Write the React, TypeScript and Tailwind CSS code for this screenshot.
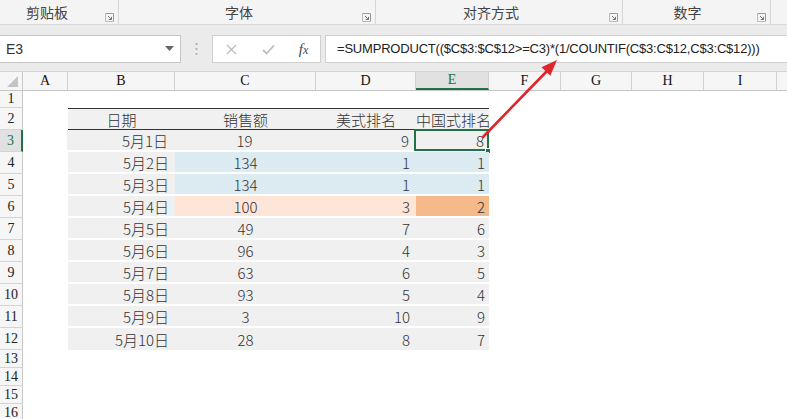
import React from "react";

const CJK = { fontFamily: '"Noto Sans CJK SC", "Noto Sans", sans-serif' };
const SERIF = { fontFamily: '"Liberation Serif", "DejaVu Serif", serif' };
const SANS = { fontFamily: '"Liberation Sans", "Noto Sans CJK SC", sans-serif' };

type Row = [string, string, string, string];
const data: Row[] = [
  ["5月1日", "19", "9", "8"],
  ["5月2日", "134", "1", "1"],
  ["5月3日", "134", "1", "1"],
  ["5月4日", "100", "3", "2"],
  ["5月5日", "49", "7", "6"],
  ["5月6日", "96", "4", "3"],
  ["5月7日", "63", "6", "5"],
  ["5月8日", "93", "5", "4"],
  ["5月9日", "3", "10", "9"],
  ["5月10日", "28", "8", "7"],
];

function Launcher() {
  return (
    <svg width="9" height="9" viewBox="0 0 9 9" className="shrink-0">
      <path d="M0.5 0.5 H8.5 V8.5" fill="none" stroke="#9a9a9a" strokeWidth="1" />
      <path d="M0.5 0.5 V8.5 H8.5" fill="none" stroke="#bbb" strokeWidth="1" />
      <path d="M3 3 L6.5 6.5 M6.5 3.8 V6.5 H3.8" fill="none" stroke="#777" strokeWidth="1" />
    </svg>
  );
}

function RibbonGroup({ label, w, pr }: { label: string; w: string; pr: string }) {
  return (
    <div className={`${w} ${pr} shrink-0 relative flex h-full items-center justify-center border-r border-[#d6d6d6]`}>
      <span className="text-[14px] text-[#444]" style={CJK}>{label}</span>
      <div className="absolute right-[4px] top-[13px]"><Launcher /></div>
    </div>
  );
}

function RowHeader({ n, h, sel }: { n: number; h: string; sel?: boolean }) {
  return (
    <div
      className={`${h} w-[23px] shrink-0 flex items-center justify-center border-b border-[#d4d4d4] text-[14px] leading-none ${
        sel ? "bg-[#e1e1e1] border-r-2 border-r-[#217346] text-[#217346]" : "bg-[#f6f6f6] border-r border-r-[#c8c8c8] text-[#222]"
      }`}
      style={SERIF}
    >
      {n}
    </div>
  );
}

export default function App() {
  const colHeaders: { l: string; w: string; sel?: boolean }[] = [
    { l: "A", w: "w-[45px]" },
    { l: "B", w: "w-[107px]" },
    { l: "C", w: "w-[141px]" },
    { l: "D", w: "w-[100px]" },
    { l: "E", w: "w-[73px]", sel: true },
    { l: "F", w: "w-[72px]" },
    { l: "G", w: "w-[71px]" },
    { l: "H", w: "w-[72px]" },
    { l: "I", w: "w-[73px]" },
    { l: "", w: "w-[20px]" },
  ];

  const bgC = (i: number) => (i === 1 || i === 2 ? "bg-[#dbebf1]" : i === 3 ? "bg-[#fde6d8]" : "bg-[#f0f0f0]");
  const bgE = (i: number) => (i === 1 || i === 2 ? "bg-[#dbebf1]" : i === 3 ? "bg-[#f6b98a]" : "bg-[#f0f0f0]");

  return (
    <div className="relative w-[787px] h-[419px] overflow-hidden bg-white">
      {/* Ribbon group labels */}
      <div className="flex h-[25px] bg-[#f4f4f4] border-b border-[#d8d8d8]">
        <RibbonGroup label="剪贴板" w="w-[119px]" pr="pr-[24px]" />
        <RibbonGroup label="字体" w="w-[257px]" pr="pr-[16px]" />
        <RibbonGroup label="对齐方式" w="w-[247px]" pr="pr-[16px]" />
        <RibbonGroup label="数字" w="w-[148px]" pr="pr-[18px]" />
        <div className="flex-1" />
      </div>

      {/* Formula bar */}
      <div className="flex h-[47px] bg-[#ebebeb] pt-[10px] pb-[9px] border-b border-[#d6d6d6]">
        <div className="w-[181px] shrink-0 h-[28px] bg-white border border-[#c6c6c6] border-l-0 flex items-center justify-between pl-[6px] pr-[6px]">
          <span className="text-[14px] text-[#333]" style={SANS}>E3</span>
          <svg width="9" height="6" viewBox="0 0 9 6"><path d="M0 0 H9 L4.5 5 Z" fill="#666" /></svg>
        </div>
        <div className="w-[31px] shrink-0 flex items-center justify-center">
          <svg width="3" height="14" viewBox="0 0 3 14">
            <circle cx="1.5" cy="2" r="1.1" fill="#aaa" />
            <circle cx="1.5" cy="7" r="1.1" fill="#aaa" />
            <circle cx="1.5" cy="12" r="1.1" fill="#aaa" />
          </svg>
        </div>
        <div className="w-[109px] shrink-0 h-[28px] bg-white border border-[#d0d0d0] flex items-center">
          <div className="w-[36px] flex justify-center">
            <svg width="11" height="11" viewBox="0 0 11 11"><path d="M1 1 L10 10 M10 1 L1 10" stroke="#bdbdbd" strokeWidth="1.4" /></svg>
          </div>
          <div className="w-[38px] flex justify-center">
            <svg width="13" height="11" viewBox="0 0 13 11"><path d="M1 6 L4.5 9.5 L12 1.5" fill="none" stroke="#bdbdbd" strokeWidth="1.8" /></svg>
          </div>
          <div className="flex-1 flex justify-center">
            <span className="italic text-[15px] text-[#444] leading-none" style={SERIF}>
              f<span className="text-[12px]">x</span>
            </span>
          </div>
        </div>
        <div className="w-[4px] shrink-0" />
        <div className="flex-1 min-w-0 h-[28px] bg-white border border-[#d0d0d0] border-r-0 flex items-center pl-[11px] overflow-hidden">
          <span className="text-[13px] text-[#222] whitespace-nowrap tracking-[-0.2px]" style={SANS}>
            =SUMPRODUCT(($C$3:$C$12&gt;=C3)*(1/COUNTIF(C$3:C$12,C$3:C$12)))
          </span>
        </div>
      </div>

      {/* Column headers */}
      <div className="flex h-[19px] bg-[#f6f6f6] border-b border-[#c6c6c6]">
        <div className="w-[23px] shrink-0 border-r border-[#c8c8c8] flex items-end justify-end pr-[4px] pb-[3px]">
          <svg width="11" height="11" viewBox="0 0 11 11"><path d="M11 0 V11 H0 Z" fill="#c4c4c4" /></svg>
        </div>
        {colHeaders.map((c) => (
          <div
            key={c.l + c.w}
            className={`${c.w} shrink-0 flex items-center justify-center border-r border-[#d0d0d0] text-[14px] leading-none ${
              c.sel ? "bg-[#e1e1e1] border-b-2 border-b-[#217346] text-[#217346]" : "text-[#111]"
            }`}
            style={SERIF}
          >
            {c.l}
          </div>
        ))}
      </div>

      {/* Row 1 */}
      <div className="flex">
        <RowHeader n={1} h="h-[17px]" />
        <div className="flex-1" />
      </div>

      {/* Row 2 header row */}
      <div className="flex">
        <RowHeader n={2} h="h-[22px]" />
        <div className="w-[45px] shrink-0" />
        <div className="flex h-[22px] border-t border-b border-[#333] bg-[#f1f1f1] text-[15px] font-light text-[#333]" style={CJK}>
          <div className="w-[107px] flex items-center justify-center leading-none">日期</div>
          <div className="w-[141px] flex items-center justify-center leading-none">销售额</div>
          <div className="w-[100px] flex items-center justify-center leading-none">美式排名</div>
          <div className="w-[73px] flex items-center justify-center leading-none whitespace-nowrap">
            <span className="-mr-[2px]">中国式排名</span>
          </div>
        </div>
      </div>

      {/* Data rows */}
      {data.map((r, i) => (
        <div className="flex" key={i}>
          <RowHeader n={i + 3} h="h-[22px]" sel={i === 0} />
          <div className={i === 0 ? "w-[44px] shrink-0" : "w-[45px] shrink-0"} />
          <div
            className={`flex h-[22px] text-[15px] font-light text-[#333] leading-none ${i < 9 ? "border-b-2 border-white" : ""}`}
            style={CJK}
          >
            <div className="w-[107px] bg-[#f0f0f0] flex items-center justify-end pr-[6px]">{r[0]}</div>
            <div className={`w-[141px] ${bgC(i)} flex items-center justify-center`}>{r[1]}</div>
            <div className={`w-[100px] ${bgC(i)} flex items-center justify-end pr-[6px]`}>{r[2]}</div>
            <div
              className={`relative w-[73px] ${bgE(i)} flex items-center justify-end pr-[4px] ${
                i === 0 ? "outline-2 outline-[#217346] -outline-offset-1" : ""
              }`}
            >
              {r[3]}
              {i === 0 && <div className="absolute -right-[3px] -bottom-[4px] w-[6px] h-[6px] bg-[#217346] border border-white" />}
            </div>
          </div>
        </div>
      ))}

      {/* Rows 13-16 */}
      {[13, 14, 15, 16].map((n) => (
        <div className="flex" key={n}>
          <RowHeader n={n} h="h-[18px]" />
          <div className="flex-1" />
        </div>
      ))}

      {/* Red arrow overlay */}
      <svg className="absolute left-0 top-0 pointer-events-none" width="787" height="419" viewBox="0 0 787 419">
        <line x1="483" y1="137" x2="548" y2="70" stroke="#e0262a" strokeWidth="2.6" strokeLinecap="round" />
        <path d="M557 60 L550.3 75.8 L541.5 67.2 Z" fill="#e0262a" />
      </svg>
    </div>
  );
}
